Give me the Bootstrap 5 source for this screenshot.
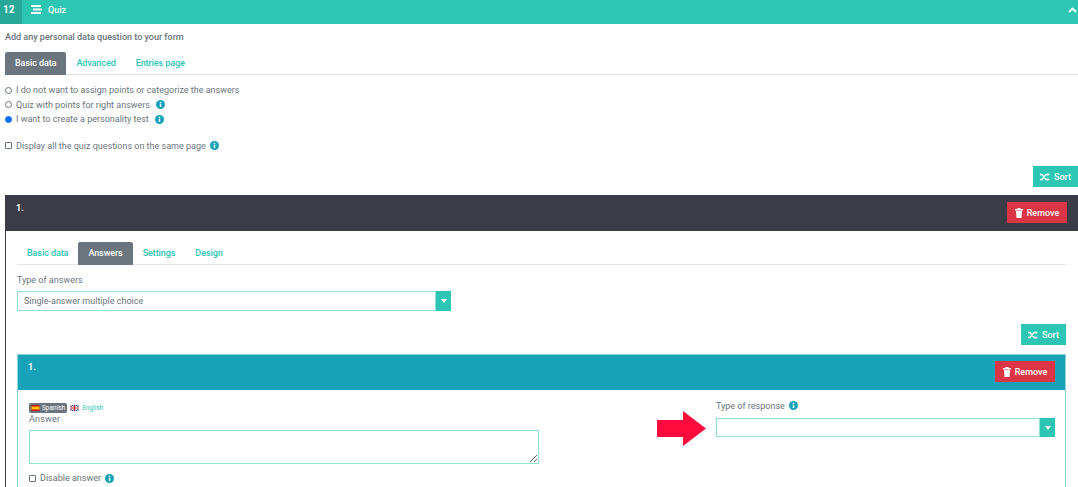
<!DOCTYPE html>
<html lang="en">
<head>
    <meta charset="UTF-8">
    <meta name="viewport" content="width=device-width, initial-scale=1.0">
    <title>Quiz</title>
    <link href="https://cdn.jsdelivr.net/npm/bootstrap@5.3.0/dist/css/bootstrap.min.css" rel="stylesheet">
    <style>
        html, body { height: 487px; overflow: hidden; }
        body { font-family: Roboto, "Liberation Sans", sans-serif; font-size: 9px; line-height: 14px; color: #6c757d; background: #fff; }
        .quiz-head { height: 24px; background: #2dc6b4; color: #fff; }
        .quiz-num { width: 22px; height: 24px; background: #27a898; font-weight: 700; font-size: 10px; padding-left: 3px; padding-top: 3px; }
        .quiz-icon { margin: -6px 0 0 9px; }
        .quiz-title { margin: -4px 0 0 6px; font-size: 9px; font-weight: 500; }
        .quiz-chevron { margin: -4px 1px 0 auto; }
        .quiz-body { padding: 6px 0 0 5px; }
        .quiz-lead { font-weight: 500; margin-bottom: 8px; height: 14px; }
        .tab-row { display: flex; border-bottom: 1px solid #e4e6e8; height: 23px; }
        .tab-item { padding: 4px 10px 0; height: 23px; color: #2dc6b4; font-weight: 500; letter-spacing: -.08px; }
        .tab-item.on { background: #6c757d; color: #fff; border-radius: 2px 2px 0 0; }
        .opt-row { display: flex; align-items: center; height: 14.5px; gap: 4px; }
        .opt-row .form-check-input { width: 7px; height: 7px; margin: 0; border-color: #6c757d; flex: none; }
        .opt-row .form-check-input:checked { background-color: #0d6efd; border-color: #0d6efd; background-image: none; }
        .opt-row .form-check-input[type=checkbox] { border-radius: 1px; }
        .opt-gap { margin-top: 12px; }
        .info-ico { width: 9px; height: 9px; margin-left: 2px; flex: none; }
        .opt-tight .info-ico { margin-left: 0; }
        .sort-row { margin-top: 13px; }
        .btn-sort { background: #2dc6b4; color: #fff; font-size: 9px; font-weight: 500; border: 0; border-radius: 0; padding: 0; width: 45px; height: 21px; display: flex; align-items: center; justify-content: center; gap: 4px; }
        .btn-drop { background: #dc3545; color: #fff; font-size: 9px; font-weight: 500; border: 0; border-radius: 0; padding: 0; width: 60px; height: 21px; margin-top: 1px; display: flex; align-items: center; justify-content: center; gap: 4px; }
        .panel-outer { border: 1px solid #3c3c46; border-right: 0; margin-top: 8px; min-height: 400px; }
        .bar-dark { height: 35px; background: #3c3c46; color: #fff; padding: 5px 11px 0 10px; font-weight: 700; }
        .panel-inner { padding: 11px 12px 0 11px; }
        .fld-label { height: 14px; margin-top: 8px; }
        .pick-box { display: flex; height: 20px; }
        .pick-wide { width: 434px; margin-top: 4px; }
        .pick-box select { flex: 1; appearance: none; min-width: 0; border: 1px solid #8fe0d5; border-radius: 0; background: #fff; color: #6c757d; font-size: 9px; padding: 0 6px; outline: 0; }
        .pick-arrow { width: 15px; background: #2dc6b4; display: flex; align-items: center; justify-content: center; }
        .pick-arrow::after { content: ""; border-left: 3px solid transparent; border-right: 3px solid transparent; border-top: 4px solid #fff; }
        .panel-answer { border: 1px solid #8fd3dc; margin-top: 9px; min-height: 200px; }
        .bar-teal { height: 35px; background: #17a2b8; color: #fff; padding: 5px 10px 0 10px; font-weight: 700; }
        .answer-cols { display: flex; justify-content: space-between; padding: 13px 10px 0 11px; }
        .col-answer { width: 510px; }
        .col-response { width: 339px; position: relative; }
        .resp-label { height: 11px; margin: -3px 0 7px; }
        .resp-label .info-ico { margin-left: 4px; }
        .pick-thin { height: 19px; }
        .lang-row { display: flex; align-items: center; gap: 3px; height: 10px; font-size: 6.500px; color: #2dc6b4; }
        .lang-on { background: #6c757d; color: #fff; border-radius: 2px; height: 10px; padding: 0 2px; display: flex; align-items: center; gap: 2px; }
        .answer-label { height: 13px; line-height: 13px; letter-spacing: .2px; }
        .answer-text { display: block; width: 510px; height: 34px; margin-top: 4px; border: 1px solid #8fe0d5; border-radius: 0; padding: 2px 6px; outline: 0; }
        .disable-row { margin-top: 7px; }
        .red-arrow { position: absolute; left: -59px; top: 8px; width: 49px; height: 35px; }
    </style>
</head>
<body>
    <div class="quiz-head d-flex align-items-center">
        <div class="quiz-num">12</div>
        <svg class="quiz-icon" width="11" height="9" viewBox="0 0 11 9" fill="#fff"><rect x="0" y="0" width="10" height="2"/><rect x="2" y="3.500" width="9" height="2"/><rect x="0" y="7" width="10" height="2"/></svg>
        <span class="quiz-title">Quiz</span>
        <svg class="quiz-chevron" width="9" height="6" viewBox="0 0 9 6"><path d="M1 5l3.500-3.500L8 5" fill="none" stroke="#fff" stroke-width="1.800"/></svg>
    </div>

    <div class="quiz-body">
        <div class="quiz-lead">Add any personal data question to your form</div>
        <div class="tab-row">
            <div class="tab-item on">Basic data</div>
            <div class="tab-item">Advanced</div>
            <div class="tab-item">Entries page</div>
        </div>

        <div class="mt-2">
            <label class="opt-row"><input class="form-check-input" type="radio" name="mode"> I do not want to assign points or categorize the answers</label>
            <label class="opt-row"><input class="form-check-input" type="radio" name="mode"> Quiz with points for right answers
                <svg class="info-ico" viewBox="0 0 10 10"><circle cx="5" cy="5" r="5" fill="#17a2b8"/><rect x="4.200" y="4.200" width="1.600" height="3.600" fill="#fff"/><rect x="4.200" y="2" width="1.600" height="1.500" fill="#fff"/></svg></label>
            <label class="opt-row"><input class="form-check-input" type="radio" name="mode" checked> I want to create a personality test
                <svg class="info-ico" viewBox="0 0 10 10"><circle cx="5" cy="5" r="5" fill="#17a2b8"/><rect x="4.200" y="4.200" width="1.600" height="3.600" fill="#fff"/><rect x="4.200" y="2" width="1.600" height="1.500" fill="#fff"/></svg></label>
            <label class="opt-row opt-gap opt-tight"><input class="form-check-input" type="checkbox"> Display all the quiz questions on the same page
                <svg class="info-ico" viewBox="0 0 10 10"><circle cx="5" cy="5" r="5" fill="#17a2b8"/><rect x="4.200" y="4.200" width="1.600" height="3.600" fill="#fff"/><rect x="4.200" y="2" width="1.600" height="1.500" fill="#fff"/></svg></label>
        </div>

        <div class="d-flex justify-content-end sort-row">
            <button class="btn-sort" type="button">
                <svg width="10" height="8" viewBox="0 0 10 8"><path d="M0 1.500h2l4 5h2M0 6.500h2l4-5h2" fill="none" stroke="#fff" stroke-width="1.300"/><path d="M7.500 0l2.500 1.500-2.500 1.500zM7.500 5l2.500 1.500-2.500 1.500z" fill="#fff"/></svg>
                Sort
            </button>
        </div>

        <div class="panel-outer">
            <div class="bar-dark d-flex justify-content-between">
                <span>1.</span>
                <button class="btn-drop" type="button">
                    <svg width="8" height="10" viewBox="0 0 8 10" fill="#fff"><rect x="0" y="1" width="8" height="1.500"/><rect x="2.500" y="0" width="3" height="1.200"/><path d="M1 3h6l-.5 7h-5z"/></svg>
                    Remove
                </button>
            </div>
            <div class="panel-inner">
                <div class="tab-row">
                    <div class="tab-item">Basic data</div>
                    <div class="tab-item on">Answers</div>
                    <div class="tab-item">Settings</div>
                    <div class="tab-item">Design</div>
                </div>
                <div class="fld-label">Type of answers</div>
                <div class="pick-box pick-wide">
                    <select><option>Single-answer multiple choice</option></select>
                    <span class="pick-arrow"></span>
                </div>
                <div class="d-flex justify-content-end sort-row">
                    <button class="btn-sort" type="button">
                        <svg width="10" height="8" viewBox="0 0 10 8"><path d="M0 1.500h2l4 5h2M0 6.500h2l4-5h2" fill="none" stroke="#fff" stroke-width="1.300"/><path d="M7.500 0l2.500 1.500-2.500 1.500zM7.500 5l2.500 1.500-2.500 1.500z" fill="#fff"/></svg>
                        Sort
                    </button>
                </div>
                <div class="panel-answer">
                    <div class="bar-teal d-flex justify-content-between">
                        <span>1.</span>
                        <button class="btn-drop" type="button">
                            <svg width="8" height="10" viewBox="0 0 8 10" fill="#fff"><rect x="0" y="1" width="8" height="1.500"/><rect x="2.500" y="0" width="3" height="1.200"/><path d="M1 3h6l-.5 7h-5z"/></svg>
                            Remove
                        </button>
                    </div>
                    <div class="answer-cols">
                        <div class="col-answer">
                            <div class="lang-row">
                                <span class="lang-on">
                                    <svg width="9" height="6" viewBox="0 0 8 6"><rect width="8" height="6" fill="#c60b1e"/><rect y="1.500" width="8" height="3" fill="#ffc400"/></svg>
                                    Spanish
                                </span>
                                <svg width="9" height="6" viewBox="0 0 8 6"><rect width="8" height="6" fill="#2b3f8c"/><path d="M0 0l8 6M8 0L0 6" stroke="#fff" stroke-width="1"/><path d="M4 0v6M0 3h8" stroke="#fff" stroke-width="2"/><path d="M4 0v6M0 3h8" stroke="#d0152c" stroke-width="1"/></svg>
                                English
                            </div>
                            <div class="answer-label">Answer</div>
                            <textarea class="answer-text"></textarea>
                            <label class="opt-row disable-row opt-tight"><input class="form-check-input" type="checkbox"> Disable answer
                                <svg class="info-ico" viewBox="0 0 10 10"><circle cx="5" cy="5" r="5" fill="#17a2b8"/><rect x="4.200" y="4.200" width="1.600" height="3.600" fill="#fff"/><rect x="4.200" y="2" width="1.600" height="1.500" fill="#fff"/></svg></label>
                        </div>
                        <div class="col-response">
                            <div class="resp-label d-flex align-items-center">Type of response
                                <svg class="info-ico" viewBox="0 0 10 10"><circle cx="5" cy="5" r="5" fill="#17a2b8"/><rect x="4.200" y="4.200" width="1.600" height="3.600" fill="#fff"/><rect x="4.200" y="2" width="1.600" height="1.500" fill="#fff"/></svg></div>
                            <div class="pick-box pick-thin">
                                <select><option></option></select>
                                <span class="pick-arrow"></span>
                            </div>
                            <svg class="red-arrow" viewBox="0 0 49 35"><path d="M0 9h26V0l23 17.500L26 35V26H0z" fill="#ff0a3c"/></svg>
                        </div>
                    </div>
                </div>
            </div>
        </div>
    </div>

    <script src="https://cdn.jsdelivr.net/npm/bootstrap@5.3.0/dist/js/bootstrap.bundle.min.js"></script>
</body>
</html>
